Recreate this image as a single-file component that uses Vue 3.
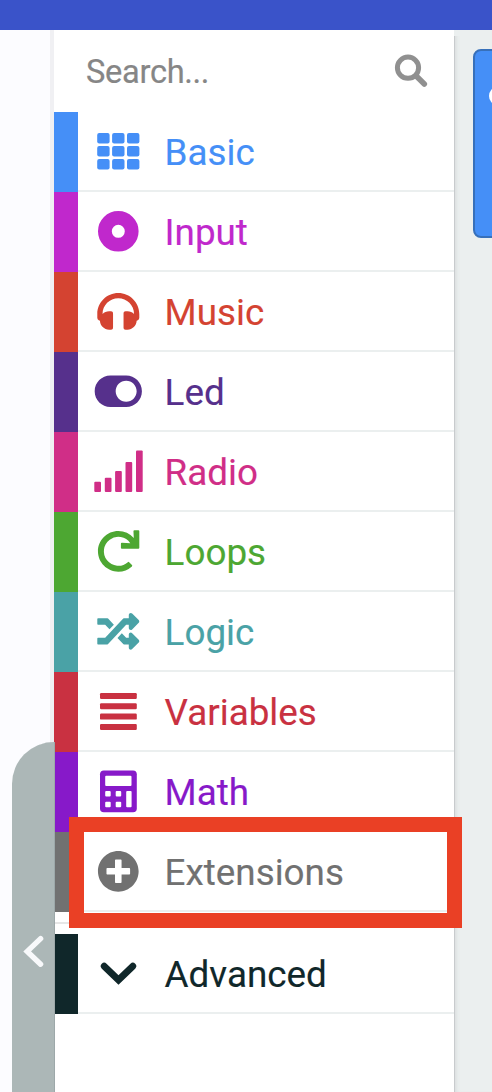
<script setup>
const categories = [
  { name: 'Basic', id: 'basic' },
  { name: 'Input', id: 'input' },
  { name: 'Music', id: 'music', path: 'M256 32C114.52 32 0 146.497 0 288v48a32 32 0 0 0 17.689 28.622l14.383 7.191C34.083 431.903 83.421 480 144 480h24c13.255 0 24-10.745 24-24V280c0-13.255-10.745-24-24-24h-24c-31.342 0-59.671 12.879-80 33.627V288c0-105.869 86.131-192 192-192s192 86.131 192 192v1.627C427.671 268.879 399.342 256 368 256h-24c-13.255 0-24 10.745-24 24v176c0 13.255 10.745 24 24 24h24c60.579 0 109.928-48.098 111.929-108.187l14.382-7.191A32 32 0 0 0 512 336v-48c0-141.479-114.496-256-256-256z' },
  { name: 'Led', id: 'led', path: 'M352 64H160C54 64 -32 150 -32 256s86 192 192 192h192c106 0 192-86 192-192S458 64 352 64zm0 320c-70.8 0-128-57.3-128-128 0-70.8 57.3-128 128-128 70.8 0 128 57.3 128 128 0 70.8-57.3 128-128 128z' },
  { name: 'Radio', id: 'radio' },
  { name: 'Loops', id: 'loops', path: 'M500.33 0h-47.41a12 12 0 0 0-12 12.57l4 82.76A247.42 247.42 0 0 0 256 8C119.34 8 7.9 119.53 8 256.19 8.1 393.07 119.1 504 256 504a247.1 247.1 0 0 0 166.18-63.91 12 12 0 0 0 .48-17.43l-34-34a12 12 0 0 0-16.38-.55A176 176 0 1 1 402.1 157.8l-101.53-4.87a12 12 0 0 0-12.57 12v47.41a12 12 0 0 0 12 12h200.33a12 12 0 0 0 12-12V12a12 12 0 0 0-12-12z' },
  { name: 'Logic', id: 'logic', path: 'M504.971 359.029c9.373 9.373 9.373 24.569 0 33.941l-80 79.984c-15.01 15.01-40.971 4.49-40.971-16.971V416h-58.785a12.004 12.004 0 0 1-8.773-3.812l-70.556-75.596 53.333-57.143L352 336h32v-39.981c0-21.438 25.943-31.998 40.971-16.971l80 79.981zM12 176h84l52.781 56.551 53.333-57.143-70.556-75.596A11.999 11.999 0 0 0 122.785 96H12c-6.627 0-12 5.373-12 12v56c0 6.627 5.373 12 12 12zm372 0v39.984c0 21.46 25.961 31.98 40.971 16.971l80-79.984c9.373-9.373 9.373-24.569 0-33.941l-80-79.981C409.943 24.021 384 34.582 384 56.019V96h-58.785a12.004 12.004 0 0 0-8.773 3.812L96 336H12c-6.627 0-12 5.373-12 12v56c0 6.627 5.373 12 12 12h110.785c3.326 0 6.503-1.381 8.773-3.812L352 176h32z' },
  { name: 'Variables', id: 'variables' },
  { name: 'Math', id: 'math' },
  { name: 'Extensions', id: 'extensions', path: 'M256 8C119 8 8 119 8 256s111 248 248 248 248-111 248-248S393 8 256 8zm144 276c0 6.6-5.4 12-12 12h-92v92c0 6.6-5.4 12-12 12h-56c-6.6 0-12-5.4-12-12v-92h-92c-6.6 0-12-5.4-12-12v-56c0-6.6 5.4-12 12-12h92v-92c0-6.6 5.4-12 12-12h56c6.6 0 12 5.4 12 12v92h92c6.6 0 12 5.4 12 12v56z' },
  { name: 'Advanced', id: 'advanced' },
]
const gridX = [7.2, 22.1, 37]
const gridY = [21, 34, 47]
const bars = [
  { x: 4.3, y: 49.7 },
  { x: 14.8, y: 45.7 },
  { x: 25.1, y: 39 },
  { x: 35.5, y: 30 },
  { x: 46, y: 18.4 },
]
const lines = [21, 31.3, 41.6, 51.9]
</script>

<template>
  <div class="editor">
    <header class="menubar"></header>
    <main class="body">
      <aside class="simulator"></aside>
      <nav class="toolbox">
        <div class="search">
          <span class="placeholder">Search...</span>
          <svg class="search-icon" width="34" height="34" viewBox="0 0 34 34">
            <circle cx="14" cy="13.7" r="10.6" fill="none" stroke="currentColor" stroke-width="5" />
            <path d="M22.5 22.2L30.3 30" fill="none" stroke="currentColor" stroke-width="5.6" stroke-linecap="round" />
          </svg>
        </div>
        <div v-for="c in categories" :key="c.id" class="row" :class="c.id">
          <span class="swatch"></span>
          <div class="entry">
            <svg class="icon" width="56" height="80" viewBox="0 0 56 80" fill="currentColor">
              <g v-if="c.path" transform="translate(7.3 18.3) scale(.082)"><path :d="c.path" /></g>
              <template v-else-if="c.id === 'basic'">
                <template v-for="y in gridY" :key="y">
                  <rect v-for="x in gridX" :key="x" :x="x" :y="y" width="12.4" height="10.6" rx="2" />
                </template>
              </template>
              <circle v-else-if="c.id === 'input'" cx="28.3" cy="39.3" r="13.4" fill="none" stroke="currentColor" stroke-width="13.8" />
              <template v-else-if="c.id === 'radio'">
                <rect v-for="b in bars" :key="b.x" :x="b.x" :y="b.y" width="6.7" :height="60.1 - b.y" rx="1" />
              </template>
              <template v-else-if="c.id === 'variables'">
                <rect v-for="y in lines" :key="y" x="10" :y="y" width="36.8" height="6" rx="1.2" />
              </template>
              <template v-else-if="c.id === 'math'">
                <rect x="10" y="18.4" width="36.8" height="41.8" rx="3.8" />
                <g fill="#fff">
                  <rect x="15.2" y="23.7" width="26.3" height="10.4" rx="1" />
                  <rect x="15.2" y="39.1" width="5.5" height="5.5" rx="1" />
                  <rect x="25.7" y="39.1" width="5.5" height="5.5" rx="1" />
                  <rect x="15.2" y="49.7" width="5.5" height="5.5" rx="1" />
                  <rect x="25.7" y="49.7" width="5.5" height="5.5" rx="1" />
                  <rect x="36.2" y="39.1" width="5.4" height="16.1" rx="1" />
                </g>
              </template>
              <path v-else d="M14.2 32.2L28.5 46L42.8 32.2" fill="none" stroke="currentColor" stroke-width="6.8" stroke-linecap="round" />
            </svg>
            <span class="label">{{ c.name }}</span>
          </div>
        </div>
      </nav>
      <section class="workspace">
        <div class="block"><span class="letter"></span></div>
      </section>
    </main>
    <div class="collapse">
      <svg width="43" height="350" viewBox="0 0 43 350">
        <path d="M28.6 196.6L15.2 209.4L28.6 222.2" fill="none" stroke="#f8f9fb" stroke-width="5.4" stroke-linecap="round" />
      </svg>
    </div>
    <div class="highlight"></div>
  </div>
</template>

<style>
body { margin: 0; }
</style>

<style scoped>
.editor {
  position: relative;
  display: flex;
  flex-direction: column;
  width: 492px;
  height: 1092px;
  overflow: hidden;
  font-family: Roboto, sans-serif;
}
.menubar { height: 30px; flex: none; background: #3a53c9; }
.body { flex: 1; display: grid; grid-template-columns: 54px 400px 38px; }
.simulator { background: #fcfcff; border-right: 4px solid #f0f0f3; }
.toolbox { background: #fff; z-index: 1; }
.search {
  display: flex;
  justify-content: space-between;
  height: 82px;
  padding: 0 26px 0 32px;
  color: #868686;
  line-height: 84px;
}
.placeholder { font-size: 32.6px; letter-spacing: -0.3px; -webkit-text-stroke: 0.2px currentColor; }
.search-icon { margin-top: 24px; color: #909090; }
.row { display: flex; height: 80px; }
.swatch { width: 24px; background: currentColor; }
.entry {
  flex: 1;
  display: flex;
  box-sizing: border-box;
  height: 80px;
  padding-left: 12px;
  border-bottom: 2px solid #ebefef;
}
.icon { flex: none; }
.label {
  margin-left: 18.6px;
  height: 78px;
  font-size: 36.8px;
  line-height: 82px;
  -webkit-text-stroke: 0.15px currentColor;
}
.basic { color: #458ff7; }
.input { color: #c028cc; }
.music { color: #d44331; }
.led { color: #56308c; }
.radio { color: #d02e87; }
.loops { color: #4da732; }
.logic { color: #4aa2a6; }
.variables { color: #c93141; }
.math { color: #8719c9; }
.extensions { color: #717171; }
.advanced { position: relative; margin-top: 22px; color: #10272a; }
.advanced::before {
  content: '';
  position: absolute;
  top: -12px;
  left: 0;
  width: 400px;
  height: 2px;
  background: #e6e6e6;
}
.workspace {
  background: #ebefef;
  overflow: hidden;
  box-shadow: inset 0 6px #ebefef, inset 1px 0 #c8cbcd, inset 5px 0 4px -3px #d6dadb;
}
.block {
  box-sizing: border-box;
  width: 60px;
  height: 189px;
  margin: 19px 0 0 19px;
  padding: 36px 0 0 14px;
  border: 2px solid #3770ba;
  border-radius: 8px;
  background: #458ff7;
}
.letter { display: block; width: 16px; height: 18px; border-radius: 50%; background: #fff; }
.collapse {
  position: absolute;
  z-index: 2;
  left: 12px;
  top: 742px;
  box-sizing: border-box;
  width: 43px;
  height: 350px;
  border-radius: 42px 0 0 0;
  background: #acb7b7;
  box-shadow: inset -1px 0 #9da8a9;
}
.highlight {
  position: absolute;
  z-index: 3;
  left: 69px;
  top: 817px;
  box-sizing: border-box;
  width: 393px;
  height: 111px;
  border: 15px solid #ea4025;
}
</style>
